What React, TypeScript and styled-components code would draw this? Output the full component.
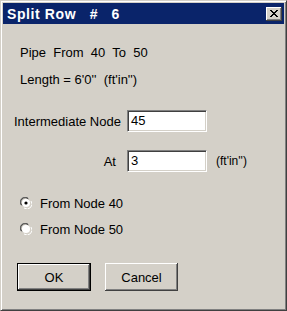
import React from "react";
import styled, { createGlobalStyle } from "styled-components";

const GlobalStyle = createGlobalStyle`
	html, body {
		margin: 0;
		padding: 0;
		background: #d4d0c8;
	}
	body {
		font-family: "Liberation Sans", Arial, sans-serif;
		font-size: 12px;
		color: #000;
	}
`;

const Window = styled.div`
	width: 287px;
	height: 311px;
	box-sizing: border-box;
	background: #d4d0c8;
	border: 1px solid;
	border-color: #d4d0c8 #404040 #404040 #d4d0c8;
	box-shadow: inset 1px 1px 0 #fff, inset -1px -1px 0 #808080;
	padding: 2px;
	display: flex;
	flex-direction: column;
`;

const TitleBar = styled.div`
	height: 21px;
	background: #0a246a;
	display: flex;
	align-items: center;
	justify-content: space-between;
	padding: 0 2px 0 4px;
`;

const Title = styled.span`
	color: #fff;
	font-weight: bold;
	font-size: 14px;
	letter-spacing: 0.6px;
	white-space: pre;
`;

const CloseButton = styled.div`
	width: 16px;
	height: 14px;
	background: #d4d0c8;
	box-shadow: inset -1px -1px 0 #404040, inset 1px 1px 0 #fff,
		inset -2px -2px 0 #808080;
	display: flex;
	align-items: center;
	justify-content: center;
`;

const Body = styled.div`
	flex: 1;
	display: flex;
	flex-direction: column;
	padding: 15px 0 0 11px;
`;

const InfoLine = styled.div`
	height: 27px;
	display: flex;
	align-items: center;
	padding-left: 6px;
	white-space: pre;
	font-size: 13px;
`;

const FieldGrid = styled.div`
	margin-top: 17px;
	display: grid;
	grid-template-columns: 113px 80px auto;
	row-gap: 18px;
	align-items: center;
`;

const FieldLabel = styled.span`
	text-align: right;
	padding-right: 11px;
	font-size: 13px;
	white-space: nowrap;
`;

const TextBox = styled.div`
	height: 22px;
	box-sizing: border-box;
	background: #fff;
	border: 1px solid;
	border-color: #808080 #fff #fff #808080;
	box-shadow: inset 1px 1px 0 #404040, inset -1px -1px 0 #d4d0c8;
	padding: 2px 3px;
	font-size: 13px;
	line-height: 16px;
`;

const Unit = styled.span`
	padding-left: 9px;
	font-size: 12px;
`;

const RadioGroup = styled.div`
	margin-top: 25px;
	display: flex;
	flex-direction: column;
	gap: 14px;
	padding-left: 6px;
`;

const RadioRow = styled.label`
	display: flex;
	align-items: center;
	gap: 8px;
	height: 12px;
	font-size: 13px;
`;

const ButtonRow = styled.div`
	margin-top: 28px;
	display: flex;
	gap: 14px;
	padding-left: 3px;
`;

const Button = styled.div<{ $default?: boolean }>`
	width: ${(p) => (p.$default ? 74 : 73)}px;
	height: 28px;
	box-sizing: border-box;
	display: flex;
	align-items: center;
	justify-content: center;
	font-size: 13px;
	background: #d4d0c8;
	border: ${(p) => (p.$default ? "1px solid #000" : "none")};
	box-shadow: inset -1px -1px 0 #404040, inset 1px 1px 0 #fff,
		inset -2px -2px 0 #808080;
`;

const Radio: React.FC<{ checked?: boolean }> = ({ checked }) => (
	<svg width="12" height="12" viewBox="0 0 12 12">
		<path d="M1 8 A5 5 0 0 1 8 1" stroke="#808080" fill="none" />
		<path d="M2 8.5 A4.2 4.2 0 0 1 8.5 2" stroke="#404040" fill="none" />
		<path d="M4 11 A5 5 0 0 0 11 4" stroke="#fff" fill="none" />
		<circle cx="6" cy="6" r="4" fill="#fff" />
		{checked && <circle cx="6" cy="6" r="1.6" fill="#000" />}
	</svg>
);

const App: React.FC = () => (
	<>
		<GlobalStyle />
		<Window>
			<TitleBar>
				<Title>Split Row   #   6</Title>
				<CloseButton>
					<svg width="8" height="7" viewBox="0 0 8 7">
						<path d="M0 0 L7 7 M1 0 L8 7 M7 0 L0 7 M8 0 L1 7" stroke="#000" strokeWidth="1" />
					</svg>
				</CloseButton>
			</TitleBar>
			<Body>
				<InfoLine>Pipe  From  40  To  50</InfoLine>
				<InfoLine>Length = 6'0''  (ft'in'')</InfoLine>
				<FieldGrid>
					<FieldLabel>Intermediate Node</FieldLabel>
					<TextBox>45</TextBox>
					<span />
					<FieldLabel>At</FieldLabel>
					<TextBox>3</TextBox>
					<Unit>(ft'in'')</Unit>
				</FieldGrid>
				<RadioGroup>
					<RadioRow>
						<Radio checked />
						From Node 40
					</RadioRow>
					<RadioRow>
						<Radio />
						From Node 50
					</RadioRow>
				</RadioGroup>
				<ButtonRow>
					<Button $default>OK</Button>
					<Button>Cancel</Button>
				</ButtonRow>
			</Body>
		</Window>
	</>
);

export default App;
